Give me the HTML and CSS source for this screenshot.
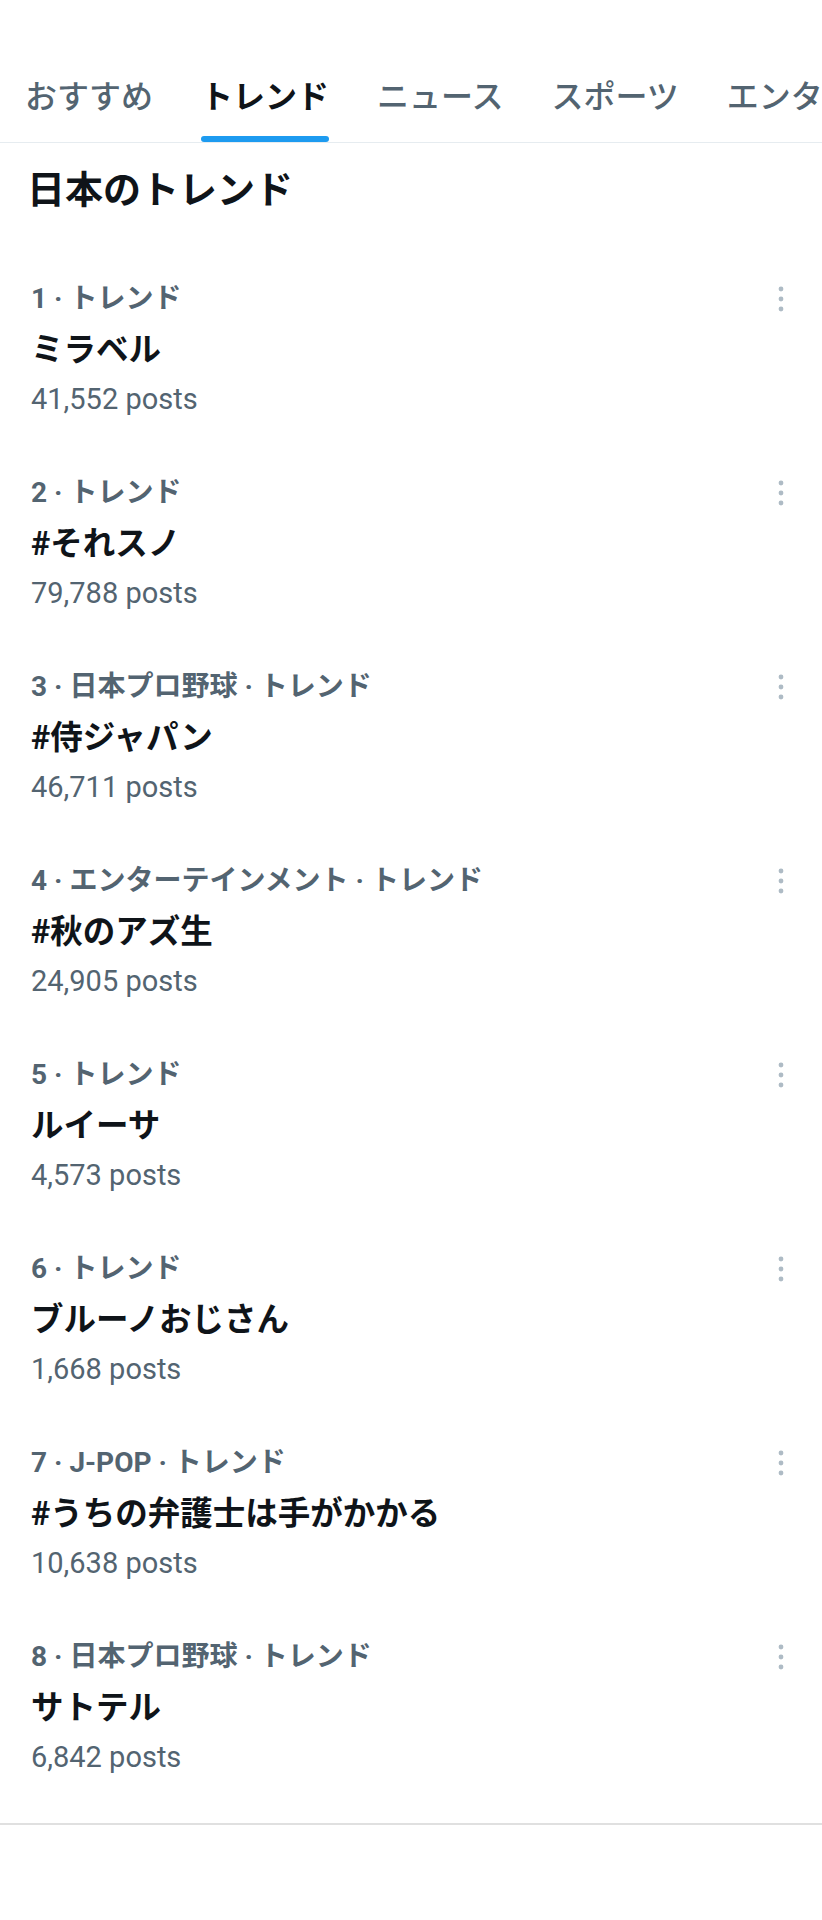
FILE: index.html
```html
<!DOCTYPE html>
<html lang="ja">
<head>
  <meta charset="UTF-8">
  <meta name="viewport" content="width=device-width, initial-scale=1.0">
  <title>トレンド</title>
  <link rel="stylesheet" href="styles.css">
</head>
<body>
  <!-- Tabs -->
  <nav class="tabs">
    <div class="tab"><span class="tab-label">おすすめ</span><div class="indicator"></div></div>
    <div class="tab active"><span class="tab-label">トレンド</span><div class="indicator"></div></div>
    <div class="tab"><span class="tab-label">ニュース</span><div class="indicator"></div></div>
    <div class="tab"><span class="tab-label">スポーツ</span><div class="indicator"></div></div>
    <div class="tab"><span class="tab-label">エンタ</span><div class="indicator"></div></div>
  </nav>

  <!-- Trends -->
  <section class="trends">
    <h2 class="section-title">日本のトレンド</h2>

    <div class="trend">
      <div class="trend-body">
        <div class="context">1 · トレンド</div>
        <div class="name">ミラベル</div>
        <div class="count">41,552 posts</div>
      </div>
      <div class="more"><svg viewBox="0 0 10 30" width="10" height="30"><circle cx="5" cy="5" r="2.4"/><circle cx="5" cy="15" r="2.4"/><circle cx="5" cy="25" r="2.4"/></svg></div>
    </div>

    <div class="trend">
      <div class="trend-body">
        <div class="context">2 · トレンド</div>
        <div class="name">#それスノ</div>
        <div class="count">79,788 posts</div>
      </div>
      <div class="more"><svg viewBox="0 0 10 30" width="10" height="30"><circle cx="5" cy="5" r="2.4"/><circle cx="5" cy="15" r="2.4"/><circle cx="5" cy="25" r="2.4"/></svg></div>
    </div>

    <div class="trend">
      <div class="trend-body">
        <div class="context">3 · 日本プロ野球 · トレンド</div>
        <div class="name">#侍ジャパン</div>
        <div class="count">46,711 posts</div>
      </div>
      <div class="more"><svg viewBox="0 0 10 30" width="10" height="30"><circle cx="5" cy="5" r="2.4"/><circle cx="5" cy="15" r="2.4"/><circle cx="5" cy="25" r="2.4"/></svg></div>
    </div>

    <div class="trend">
      <div class="trend-body">
        <div class="context">4 · エンターテインメント · トレンド</div>
        <div class="name">#秋のアズ生</div>
        <div class="count">24,905 posts</div>
      </div>
      <div class="more"><svg viewBox="0 0 10 30" width="10" height="30"><circle cx="5" cy="5" r="2.4"/><circle cx="5" cy="15" r="2.4"/><circle cx="5" cy="25" r="2.4"/></svg></div>
    </div>

    <div class="trend">
      <div class="trend-body">
        <div class="context">5 · トレンド</div>
        <div class="name">ルイーサ</div>
        <div class="count">4,573 posts</div>
      </div>
      <div class="more"><svg viewBox="0 0 10 30" width="10" height="30"><circle cx="5" cy="5" r="2.4"/><circle cx="5" cy="15" r="2.4"/><circle cx="5" cy="25" r="2.4"/></svg></div>
    </div>

    <div class="trend">
      <div class="trend-body">
        <div class="context">6 · トレンド</div>
        <div class="name">ブルーノおじさん</div>
        <div class="count">1,668 posts</div>
      </div>
      <div class="more"><svg viewBox="0 0 10 30" width="10" height="30"><circle cx="5" cy="5" r="2.4"/><circle cx="5" cy="15" r="2.4"/><circle cx="5" cy="25" r="2.4"/></svg></div>
    </div>

    <div class="trend">
      <div class="trend-body">
        <div class="context">7 · J-POP · トレンド</div>
        <div class="name">#うちの弁護士は手がかかる</div>
        <div class="count">10,638 posts</div>
      </div>
      <div class="more"><svg viewBox="0 0 10 30" width="10" height="30"><circle cx="5" cy="5" r="2.4"/><circle cx="5" cy="15" r="2.4"/><circle cx="5" cy="25" r="2.4"/></svg></div>
    </div>

    <div class="trend">
      <div class="trend-body">
        <div class="context">8 · 日本プロ野球 · トレンド</div>
        <div class="name">サトテル</div>
        <div class="count">6,842 posts</div>
      </div>
      <div class="more"><svg viewBox="0 0 10 30" width="10" height="30"><circle cx="5" cy="5" r="2.4"/><circle cx="5" cy="15" r="2.4"/><circle cx="5" cy="25" r="2.4"/></svg></div>
    </div>
  </section>
</body>
</html>
```

FILE: styles.css
```css
body {
  margin: 0;
  padding: 0;
  background: #ffffff;
  color: #0f1419;
  font-family: Roboto, "Noto Sans CJK JP", sans-serif;
}
.tabs {
  display: flex;
  padding-top: 77px;
  border-bottom: 1px solid #e6ecf0;
  overflow: hidden;
  white-space: nowrap;
}
.tab {
  display: flex;
  flex-direction: column;
  flex-shrink: 0;
  padding: 0 24px;
  color: #536471;
  font-size: 32px;
  font-weight: 500;
}
.tab:first-child {
  padding-left: 25px;
}
.tab-label {
  line-height: 40px;
  padding-bottom: 19px;
}
.indicator {
  height: 6px;
  border-radius: 3px;
}
.tab.active {
  color: #0f1419;
  font-weight: 700;
}
.tab.active .indicator {
  background: #1d9bf0;
}
.trends {
  padding-bottom: 21px;
  border-bottom: 2px solid #e0e0e0;
}
.section-title {
  margin: 0;
  padding: 19px 27px 32px;
  font-size: 38px;
  line-height: 56px;
  font-weight: 700;
}
.trend {
  display: flex;
  height: 194px;
  box-sizing: border-box;
  padding: 23px 36px 22px 31px;
}
.trend-body {
  flex: 1;
}
.context {
  color: #536471;
  font-size: 28px;
  font-weight: 700;
  line-height: 51px;
}
.name {
  font-size: 32.5px;
  font-weight: 700;
  line-height: 52px;
}
.count {
  color: #536471;
  font-size: 29px;
  line-height: 46px;
}
.more {
  height: 51px;
  display: flex;
  align-items: center;
}
.more svg {
  fill: #aebbc5;
  display: block;
}
```
